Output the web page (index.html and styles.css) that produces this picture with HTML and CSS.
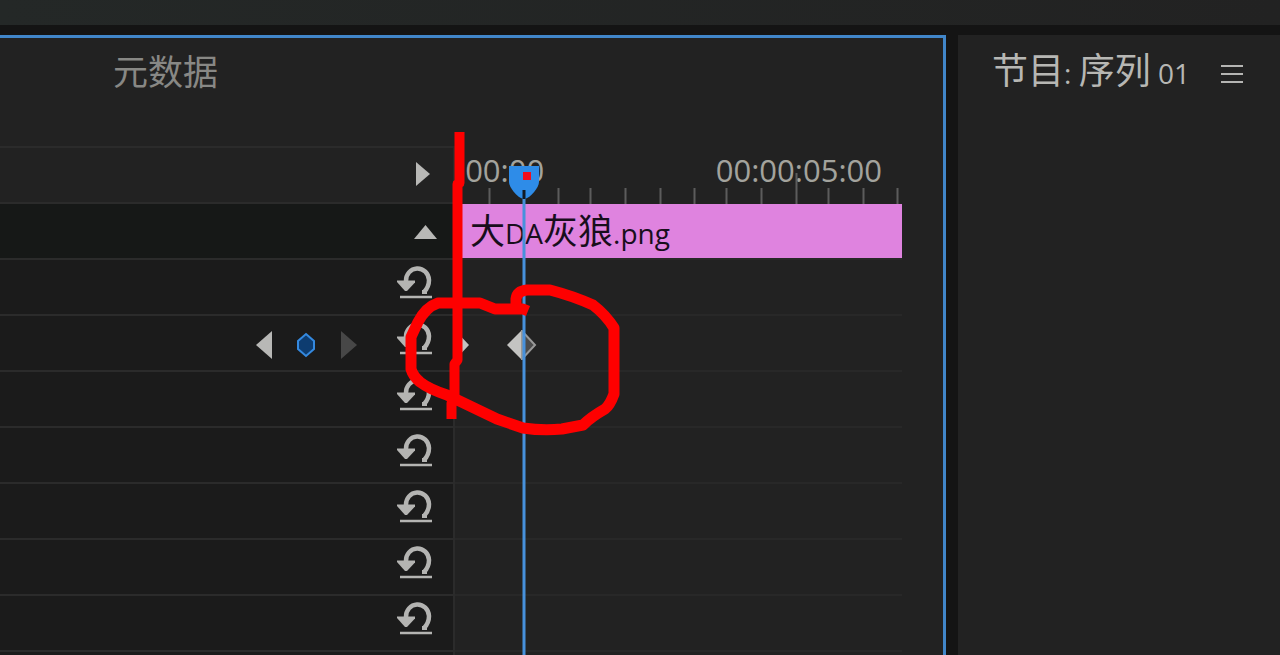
FILE: index.html
```html
<!DOCTYPE html>
<html lang="zh-CN">
<head>
<meta charset="utf-8">
<title>效果控件</title>
<link rel="stylesheet" href="styles.css">
</head>
<body>
<svg width="0" height="0" class="defs" aria-hidden="true">
  <symbol id="reset" viewBox="0 0 36 36">
    <path d="M10 18A11.500 12 0 0 1 33 17Q33 24 28 29" fill="none" stroke="#b4b4b2" stroke-width="4.500"/>
    <path d="M26 27h5v4h-5z" fill="#b4b4b2"/>
    <path d="M1 17.500h18v2L11 28h-2L1 19z" fill="#b4b4b2"/>
    <path d="M4 34h32" stroke="#b4b4b2" stroke-width="2.500"/>
  </symbol>
</svg>
<div class="app">
  <header class="topbar"></header>
  <main class="workspace">
    <section class="panel effects">
      <nav class="tabs"><button class="tab" type="button">元数据</button></nav>
      <div class="editor">
        <div class="props">
          <div class="row head"><button class="icon-btn" type="button" aria-label="显示时间轴"><svg width="36" height="28"><path d="M20 1v24L34 13z" fill="#b8b8b6"/></svg></button></div>
          <div class="row clip-head"><button class="icon-btn" type="button" aria-label="折叠"><svg width="36" height="28"><path d="M13 22h23L24.500 8z" fill="#b8b8b6"/></svg></button></div>
          <div class="row"><button class="icon-btn" type="button" aria-label="重置"><svg width="36" height="36"><use href="#reset"/></svg></button></div>
          <div class="row">
            <div class="key-nav">
              <button class="icon-btn" type="button" aria-label="上一关键帧"><svg width="17" height="28"><path d="M16 0v28L0 14z" fill="#b8b8b6"/></svg></button>
              <button class="icon-btn" type="button" aria-label="添加关键帧"><svg width="20" height="26"><path d="M9 2l8 7v8l-8 7-8-7V9z" fill="#0d3c70" stroke="#3489df" stroke-width="2"/></svg></button>
              <button class="icon-btn" type="button" aria-label="下一关键帧"><svg width="17" height="28"><path d="M0 0v28l16-14z" fill="#474747"/></svg></button>
            </div>
            <button class="icon-btn" type="button" aria-label="重置"><svg width="36" height="36"><use href="#reset"/></svg></button>
          </div>
          <div class="row"><button class="icon-btn" type="button" aria-label="重置"><svg width="36" height="36"><use href="#reset"/></svg></button></div>
          <div class="row"><button class="icon-btn" type="button" aria-label="重置"><svg width="36" height="36"><use href="#reset"/></svg></button></div>
          <div class="row"><button class="icon-btn" type="button" aria-label="重置"><svg width="36" height="36"><use href="#reset"/></svg></button></div>
          <div class="row"><button class="icon-btn" type="button" aria-label="重置"><svg width="36" height="36"><use href="#reset"/></svg></button></div>
          <div class="row"><button class="icon-btn" type="button" aria-label="重置"><svg width="36" height="36"><use href="#reset"/></svg></button></div>
          <div class="row"></div>
        </div>
        <div class="timeline">
          <div class="ruler">
            <span>:00:00</span><span>00:00:05:00</span>
            <svg class="ticks" width="447" height="32" viewBox="455 172 447 32" aria-hidden="true"><path d="M489.500 188v16M558.500 188v16M590.500 188v16M625.500 188v16M660.500 188v16M694.500 188v16M726.500 188v16M761.500 188v16M796.500 173v31M828.500 188v16M863.500 188v16M897.500 188v16" stroke="#5c5c5c" stroke-width="2"/></svg>
          </div>
          <div class="clip"><span class="cjk">大</span>DA<span class="cjk">灰狼</span>.png</div>
          <div class="track"></div>
          <div class="track">
            <svg width="90" height="30" viewBox="455 330 90 30" aria-hidden="true">
              <path d="M455 330l14 15-14 15z" fill="#c4c4c2"/>
              <path d="M507 345l15-15v30z" fill="#c4c4c2"/>
              <path d="M522 331l13 14-13 14z" fill="#4b4b4b" stroke="#999" stroke-width="2"/>
            </svg>
          </div>
          <div class="track"></div>
          <div class="track"></div>
          <div class="track"></div>
          <div class="track"></div>
          <div class="track"></div>
          <div class="track blank"></div>
          <svg class="overlay" width="240" height="560" viewBox="395 126 240 560" aria-hidden="true">
            <path d="M524 198v488" stroke="#4791dc" stroke-width="3"/>
            <path d="M509 166h30v16c0 5-8 16-15 17-7-1-15-12-15-17z" fill="#2e8ce8"/>
            <path d="M524 190v9" stroke="#111a24" stroke-width="3"/>
            <path d="M523 172h8v8h-8z" fill="#f20d1c"/>
            <g fill="none" stroke="#fe0000" stroke-linejoin="round">
              <path d="M459.500 132v51l-2 1v176l-3 4v37l-3 2v16" stroke-width="10"/>
              <path d="M528 311l-5-2h-28l-15-6h-42q-12 4-20 19l-7 15v32q2 7 9 13 9 7 27 13l50 24 26 9q20 3 39 1l21-4q8-8 22-16 5-4 9-15v-66q-8-13-21-23-20-9-43-15h-23q-10 1-11 9v10" stroke-width="11"/>
            </g>
          </svg>
        </div>
      </div>
    </section>
    <section class="panel program">
      <h2 class="title"><span class="cjk">节目</span>: <span class="cjk">序列</span> 01</h2>
      <button class="icon-btn" type="button" aria-label="面板菜单"><svg width="22" height="20"><path d="M0 2h22M0 10h22M0 18h22" stroke="#b5b5b3" stroke-width="2"/></svg></button>
    </section>
  </main>
</div>
</body>
</html>
```
FILE: styles.css
```css
* { box-sizing: border-box; }
body {
  margin: 0;
  background: #141414;
  color: #b7b7b4;
  font-family: "Open Sans", "Noto Sans CJK SC", sans-serif;
  overflow: hidden;
}
button { padding: 0; border: 0; background: none; color: inherit; font: inherit; }
svg { display: block; }
.defs { position: absolute; }
.app { display: flex; flex-direction: column; height: 100vh; }
.topbar { flex: 0 0 25px; background: linear-gradient(90deg, #242827, #222); }
.workspace { flex: 1; display: flex; gap: 12px; padding-top: 10px; min-height: 0; }
.panel { background: #222; overflow: hidden; }
.effects { flex: 1; min-width: 0; border: solid #4186c9; border-width: 3px 3px 0 0; }
.tabs { height: 108px; padding: 6px 113px; }
.tab { color: #888885; font-family: "Noto Sans CJK SC", sans-serif; font-size: 35px; font-weight: 400; line-height: 52px; }
.editor { display: flex; }
.props { flex: 1; border-right: 2px solid #2b2b2b; }
.row {
  display: flex;
  justify-content: flex-end;
  align-items: center;
  height: 56px;
  padding: 0 21px 12px 0;
  border-top: 2px solid #2b2b2b;
  background: #1b1b1b;
}
.row.head { background: #222; padding-bottom: 0; }
.row.clip-head { background: #161817; padding-bottom: 0; padding-right: 16px; }
.key-nav { display: flex; align-items: center; gap: 24px; margin-right: 38px; padding-top: 16px; }
.timeline { position: relative; flex: 0 0 488px; padding-right: 41px; }
.ruler {
  position: relative;
  display: flex;
  justify-content: space-between;
  height: 58px;
  padding: 3px 20px 0 2px;
  color: #a3a39d;
  font-size: 31px;
  line-height: 42px;
}
.ticks { position: absolute; left: 0; bottom: 0; }
.clip {
  height: 54px;
  margin-left: 6px;
  padding: 2px 0 0 9px;
  background: #df83df;
  color: #180e1c;
  font-size: 28px;
  line-height: 54px;
  white-space: nowrap;
}
.cjk { font-family: "Noto Sans CJK SC", sans-serif; font-size: 35px; font-weight: 400; line-height: 1; }
.track { height: 56px; padding-top: 14px; border-top: 2px solid #282828; }
.overlay { position: absolute; left: -60px; top: -20px; }
.program { flex: 0 0 322px; display: flex; align-items: flex-start; justify-content: space-between; padding: 12px 37px 0 34px; }
.title { margin: 0; font-size: 28px; font-weight: 400; line-height: 52px; white-space: nowrap; }
.title .cjk { font-size: 36px; }
.program .icon-btn { padding-top: 17px; }
```
